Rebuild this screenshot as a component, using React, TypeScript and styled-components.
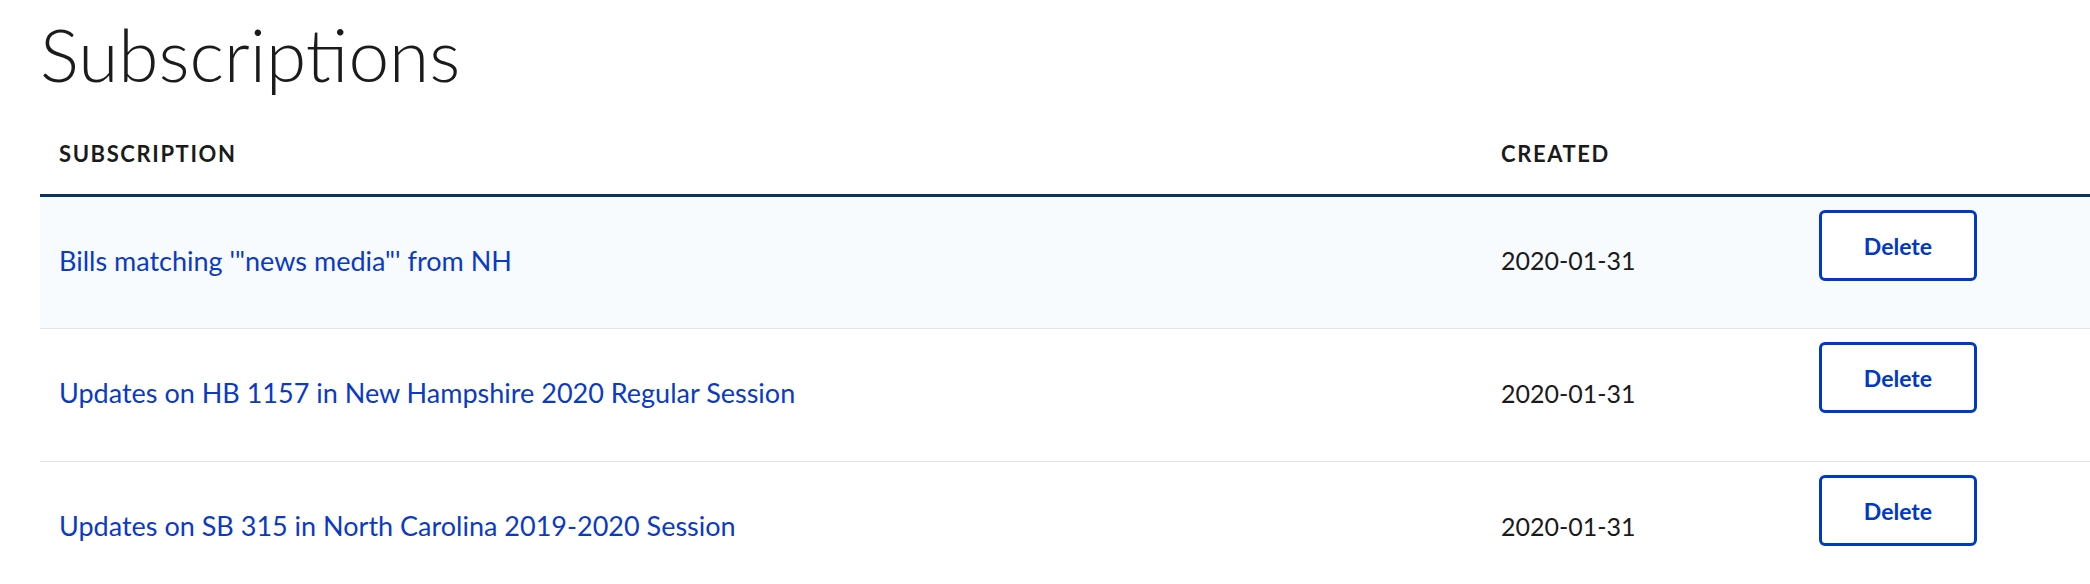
import React from 'react';
import styled, { createGlobalStyle } from 'styled-components';

const GlobalStyle = createGlobalStyle`
  body {
    margin: 0;
    background: #fff;
    font-family: Lato, "Open Sans", sans-serif;
    color: #1b1b1b;
  }
`;

const Page = styled.div`
  padding: 0 0 0 40px;
  overflow: hidden;
`;

const Title = styled.h1`
  margin: 0;
  padding-top: 6px;
  font-size: 73px;
  font-weight: 300;
  line-height: 96px;
  color: #1b1b1b;
`;

const Table = styled.table`
  width: 2050px;
  border-collapse: collapse;
  table-layout: fixed;
  margin-top: 16px;
`;

const HeadCell = styled.th<{ $w?: number }>`
  width: ${p => (p.$w ? `${p.$w}px` : 'auto')};
  text-align: left;
  padding: 22px 19px 27px;
  font-size: 22px;
  font-weight: 700;
  letter-spacing: 1.6px;
  text-transform: uppercase;
  color: #1b1b1b;
  border-bottom: 3px solid #0b3460;
`;

const Row = styled.tr<{ $shade?: boolean }>`
  background: ${p => (p.$shade ? '#f7fbfe' : '#fff')};
  border-bottom: 1px solid #dfe4ea;
`;

const Cell = styled.td<{ $top?: boolean }>`
  height: 133px;
  box-sizing: border-box;
  padding: ${p => (p.$top ? '13px 19px 0' : '0 19px 5px')};
  vertical-align: ${p => (p.$top ? 'top' : 'middle')};
  font-size: 25px;
  color: #1b1b1b;
`;

const Link = styled.a`
  color: #0a3ac6;
  text-decoration: none;
  font-size: 27px;
`;

const DeleteButton = styled.button`
  width: 158px;
  height: 71px;
  box-sizing: border-box;
  background: #fff;
  border: 3px solid #0038c7;
  border-radius: 6px;
  color: #0038c7;
  font-family: Lato, "Open Sans", sans-serif;
  font-size: 23px;
  font-weight: 700;
  cursor: pointer;
`;

const subs = [
  { name: `Bills matching '"news media"' from NH`, created: '2020-01-31' },
  { name: 'Updates on HB 1157 in New Hampshire 2020 Regular Session', created: '2020-01-31' },
  { name: 'Updates on SB 315 in North Carolina 2019-2020 Session', created: '2020-01-31' },
];

export default function App() {
  return (
    <Page>
      <GlobalStyle />
      <Title>Subscriptions</Title>
      <Table>
        <thead>
          <tr>
            <HeadCell $w={1404}>Subscription</HeadCell>
            <HeadCell $w={280}>Created</HeadCell>
            <HeadCell />
          </tr>
        </thead>
        <tbody>
          {subs.map((s, i) => (
            <Row key={i} $shade={i === 0}>
              <Cell>
                <Link href="#">{s.name}</Link>
              </Cell>
              <Cell>{s.created}</Cell>
              <Cell $top>
                <DeleteButton>Delete</DeleteButton>
              </Cell>
            </Row>
          ))}
        </tbody>
      </Table>
    </Page>
  );
}
